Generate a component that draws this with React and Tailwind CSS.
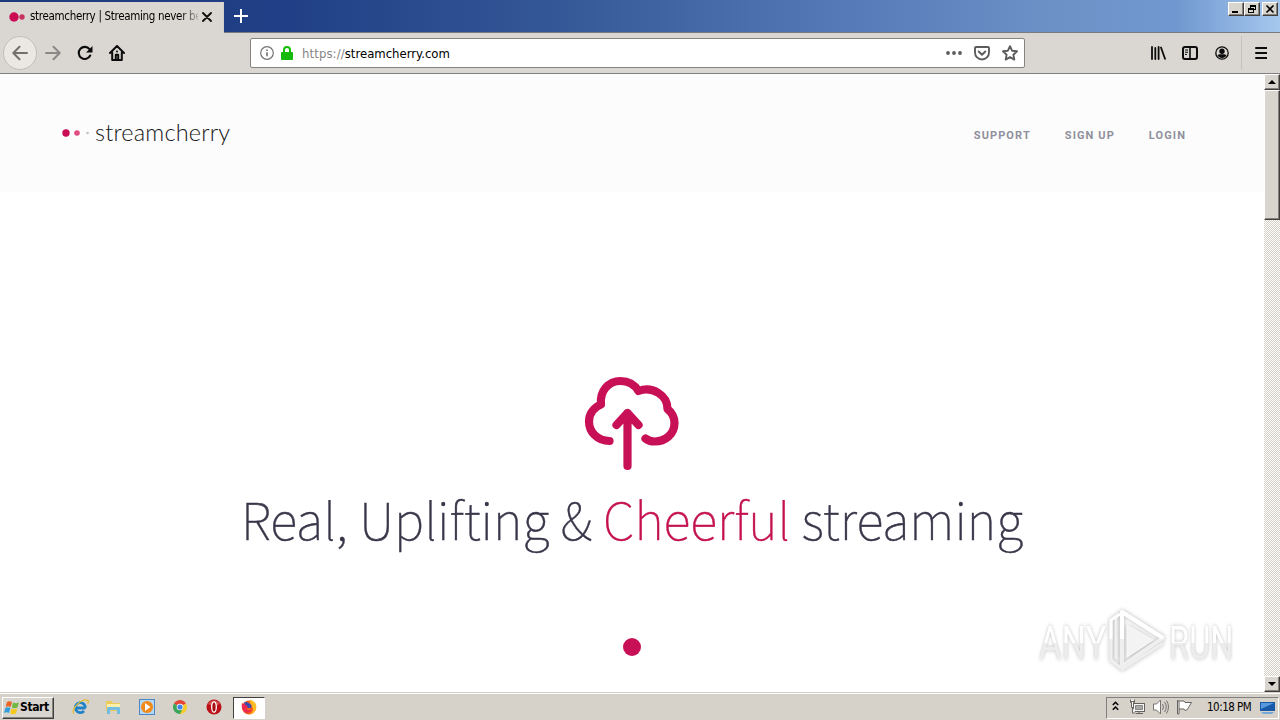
import React from 'react';

const raised = 'bg-[#d8d4ce] border border-t-white border-l-white border-r-[#404040] border-b-[#404040] shadow-[inset_-1px_-1px_0_#85827c]';

function WindowButton({ children, className = '' }) {
  return (
    <button className={`flex h-[14px] w-4 shrink-0 items-center justify-center ${raised} ${className}`}>
      <svg width="12" height="11" viewBox="0 0 12 11" fill="none" stroke="#000" shapeRendering="crispEdges">
        {children}
      </svg>
    </button>
  );
}

function TitleBar() {
  return (
    <div className="flex h-[33px] shrink-0 border-b border-[#787b82] bg-[linear-gradient(90deg,#1d3a7c_0%,#203f86_22%,#365998_45%,#5478b6_65%,#6c91c7_82%,#7198d0_92%,#a5c8ee_100%)]">
      <div className="mt-[2px] -mb-px flex w-[224px] shrink-0 items-center border-r border-[#d4d0c8] bg-[#dad6d1] pb-px">
        <svg className="ml-[9px] shrink-0" width="16" height="12" viewBox="0 0 16 12">
          <circle cx="5" cy="6" r="4.7" fill="#cb0c54" />
          <circle cx="13" cy="6" r="2.7" fill="#c9315f" />
        </svg>
        <span className="ml-[5px] w-[168px] whitespace-nowrap bg-[linear-gradient(90deg,#000_90%,transparent_102%)] bg-clip-text font-['DejaVu_Sans_Condensed','DejaVu_Sans',sans-serif] text-[11.5px] tracking-[-0.32px] text-transparent [font-stretch:condensed]">
          streamcherry | Streaming never be
        </span>
        <svg className="ml-[4px] shrink-0" width="10" height="10" viewBox="0 0 10 10" stroke="#111" strokeWidth="1.9" strokeLinecap="round">
          <path d="M1 1l8 8M9 1L1 9" />
        </svg>
      </div>
      <svg className="ml-[10px] mt-[9px]" width="14" height="14" viewBox="0 0 14 14" stroke="#fff" strokeWidth="2">
        <path d="M7 0v14M0 7h14" />
      </svg>
      <div className="ml-auto mr-[2px] mt-[2px] flex">
        <WindowButton><path d="M2 8.5h6M2 7.5h6" /></WindowButton>
        <WindowButton><path d="M4 1.5h6M4 2.5h6M4.5 1v3M9.5 1v5M7 5.5h3M2 4.5h6M2 5.5h6M2.5 4v5M7.5 4v5M2 8.5h6" /></WindowButton>
        <WindowButton className="ml-[2px]"><path d="M2.5 1.5l7 7M9.5 1.5l-7 7" strokeWidth="1.6" shapeRendering="auto" /></WindowButton>
      </div>
    </div>
  );
}

function Toolbar() {
  return (
    <div className="flex h-[41px] shrink-0 items-center border-b border-[#808080] bg-[#dad6d1]">
      <div className="ml-[3px] flex size-[34px] shrink-0 items-center justify-center rounded-full border border-[#c2bfba] bg-[#ebe8e4]">
        <svg width="16" height="16" viewBox="0 0 16 16" fill="none" stroke="#72706d" strokeWidth="2" strokeLinecap="round" strokeLinejoin="round">
          <path d="M15 8H1.5M7.5 1.8L1.3 8l6.2 6.2" />
        </svg>
      </div>
      <svg className="ml-[8px] shrink-0" width="16" height="16" viewBox="0 0 16 16" fill="none" stroke="#8b8987" strokeWidth="2" strokeLinecap="round" strokeLinejoin="round">
        <path d="M1 8h13.5M8.5 1.8L14.7 8l-6.2 6.2" />
      </svg>
      <svg className="ml-[16px] shrink-0" width="16" height="16" viewBox="0 0 16 16" fill="none" stroke="#0c0c0d" strokeWidth="2.1" strokeLinecap="round">
        <path d="M13.2 10.5A6 6 0 1 1 12.5 4.2" />
        <path d="M15.500 1v6.500H9z" fill="#0c0c0d" stroke="none" />
      </svg>
      <svg className="ml-[16px] shrink-0" width="16" height="16" viewBox="0 0 16 16" fill="none" stroke="#0c0c0d" strokeWidth="2" strokeLinecap="round" strokeLinejoin="round">
        <path d="M1 8l7-7 7 7M3.2 7.5V15h9.6V7.5" />
        <path d="M6.8 14.5V9.8h2.4v4.7" />
        <path d="M8 6.5v.1" />
      </svg>
      <div className="ml-[125px] flex h-[30px] w-[775px] shrink-0 items-center rounded-[2px] border border-[#85837f] bg-white">
        <svg className="ml-[9px]" width="14" height="14" viewBox="0 0 14 14" fill="none" stroke="#737373">
          <circle cx="7" cy="7" r="6.3" strokeWidth="1.2" />
          <path d="M7 6.2v4M7 3.4V5" strokeWidth="1.6" />
        </svg>
        <svg className="ml-[7px]" width="12" height="14" viewBox="0 0 12 14" fill="none">
          <path d="M3 7V4a3 3 0 0 1 6 0v3" stroke="#12bc00" strokeWidth="2" />
          <rect y="6" width="12" height="8" rx="1" fill="#16b90c" />
        </svg>
        <span className="ml-[9px] mt-px whitespace-nowrap font-['DejaVu_Sans_Condensed','DejaVu_Sans',sans-serif] text-[13px] text-black [font-stretch:condensed]">
          <span className="tracking-[0.1px] text-[#858585]">https://</span>streamcherry.com
        </span>
        <svg className="ml-auto" width="16" height="16" viewBox="0 0 16 16" fill="#5c5c5c">
          <circle cx="2" cy="8" r="1.9" /><circle cx="8" cy="8" r="1.9" /><circle cx="14" cy="8" r="1.9" />
        </svg>
        <svg className="ml-[12px]" width="16" height="16" viewBox="0 0 16 16" fill="none" stroke="#5c5c5c" strokeWidth="1.9" strokeLinecap="round" strokeLinejoin="round">
          <path d="M2 2h12a1 1 0 0 1 1 1v4.5a7 7 0 0 1-14 0V3a1 1 0 0 1 1-1z" />
          <path d="M4.7 6.5L8 9.7l3.3-3.2" />
        </svg>
        <svg className="ml-[12px] mr-[6px]" width="16" height="16" viewBox="0 0 16 16" fill="none" stroke="#5c5c5c" strokeWidth="1.9" strokeLinejoin="round">
          <path d="M8 1.2l2.1 4.5 4.9.6-3.6 3.4.9 4.9L8 12.2l-4.3 2.4.9-4.9L1 6.3l4.9-.6z" />
        </svg>
      </div>
      <svg className="ml-[125px] shrink-0" width="16" height="16" viewBox="0 0 16 16" stroke="#0c0c0d" strokeWidth="2" strokeLinecap="round">
        <path d="M2 2v12M5.300 3V14M8.600 2v12M11 2.5l4 11.3" strokeWidth="1.8" />
      </svg>
      <svg className="ml-[16px] shrink-0" width="16" height="16" viewBox="0 0 16 16" fill="none" stroke="#0c0c0d" strokeWidth="2">
        <rect x="1" y="2" width="14" height="12" rx="2" />
        <path d="M8 2v12" strokeWidth="1.6" />
        <path d="M3 5h3M3 7.2h3M3 9.4h2" strokeWidth="1" />
      </svg>
      <svg className="ml-[17px] shrink-0" width="14" height="14" viewBox="0 0 14 14">
        <circle cx="7" cy="7" r="6.2" fill="none" stroke="#0c0c0d" strokeWidth="1.3" />
        <circle cx="7" cy="5.2" r="2.7" fill="#0c0c0d" />
        <path d="M2.5 9.3c1.6-1.4 2.5-1 4.5-1s2.900-.4 4.500 1C10.500 11.300 9 12 7 12s-3.500-.7-4.500-2.700z" fill="#0c0c0d" />
      </svg>
      <div className="ml-[12px] h-[34px] w-px shrink-0 bg-[#c6c2bd]" />
      <svg className="ml-[13px] shrink-0" width="12" height="14" viewBox="0 0 12 14" stroke="#0c0c0d" strokeWidth="2" strokeLinecap="round">
        <path d="M1 2h10.500M1 7h10.500M1 12h10.500" />
      </svg>
    </div>
  );
}

function ScrollBar() {
  return (
    <div className="flex w-4 shrink-0 flex-col bg-[repeating-conic-gradient(#d4d0c8_0_25%,#fff_0_50%)] bg-[length:2px_2px]">
      <div className={`flex h-4 items-center justify-center ${raised}`}>
        <svg width="8" height="4" viewBox="0 0 8 4"><path d="M0 4l4-4 4 4z" /></svg>
      </div>
      <div className={`h-[130px] ${raised}`} />
      <div className={`mt-auto flex h-4 items-center justify-center ${raised}`}>
        <svg width="8" height="4" viewBox="0 0 8 4"><path d="M0 0l4 4 4-4z" /></svg>
      </div>
    </div>
  );
}

function Watermark() {
  const word = "inline-block origin-left font-['Roboto',sans-serif] text-[46px] font-normal leading-none text-transparent bg-[linear-gradient(180deg,#fff_50%,#ededed_51%)] bg-clip-text drop-shadow-[0_0_2px_rgba(0,0,0,0.25)]";
  return (
    <div className="absolute right-[31px] top-[535px] flex h-16 w-[194px] items-center">
      <div className="w-[66px] shrink-0 pt-[3px]"><span className={`${word} scale-x-[0.75]`}>ANY</span></div>
      <svg className="ml-[3px] shrink-0 overflow-visible drop-shadow-[0_0_2px_rgba(0,0,0,0.28)]" width="58" height="64" viewBox="0 0 58 64" fill="none" strokeLinejoin="round">
        <path d="M3 11v40l10 8M8 7v43" stroke="#f0f0f0" strokeWidth="3" />
        <path d="M3 30V11l9-6" stroke="#fff" strokeWidth="3" />
        <path d="M14 3l41 26-41 28z" stroke="#efefef" strokeWidth="4" />
        <path d="M14 30V3l41 26" stroke="#fff" strokeWidth="4" />
        <path d="M19 16l26 15-26 17z" fill="#f3f3f3" stroke="#fafafa" />
        <path d="M13 61l42-27" stroke="#eeeeee" strokeWidth="3" />
      </svg>
      <div className="ml-[3px] w-[64px] shrink-0 pt-[3px]"><span className={`${word} scale-x-[0.71]`}>RUN</span></div>
    </div>
  );
}

function Page() {
  return (
    <main className="relative flex min-w-0 flex-1 flex-col bg-white">
      <header className="flex h-[118px] shrink-0 items-center bg-[#fcfcfd] pl-[61px] pr-[78px]">
        <svg width="30" height="12" viewBox="0 0 30 12">
          <circle cx="5" cy="6" r="3.700" fill="#c90e55" />
          <circle cx="16" cy="6" r="2.800" fill="#df4b82" />
          <circle cx="26.500" cy="6" r="1.300" fill="#c9bcc4" />
        </svg>
        <span className="-mt-px ml-[4px] whitespace-nowrap font-['Lato',sans-serif] text-[23.5px] font-light leading-none tracking-[0.2px] text-[#161616]">streamcherry</span>
        <nav className="ml-auto mt-[4px] flex gap-[34px] whitespace-nowrap font-['Roboto',sans-serif] text-[11px] font-bold leading-none tracking-[1.1px] text-[#8f909b]">
          <span>SUPPORT</span><span>SIGN UP</span><span>LOGIN</span>
        </nav>
      </header>
      <section className="flex flex-col items-center">
        <svg className="mt-[184px]" width="96" height="96" viewBox="-0.5 0 96 96" fill="none" stroke="#c81056" strokeWidth="8.2" strokeLinecap="round" strokeLinejoin="round">
          <path d="M25 65C13 65 4.500 56 4.500 45.500c0-7.500 4.500-14 12-17C15 15 24 5 36 5c8 0 14 3.500 18 10 14-5 29 4 29 18 5 4 7 8.500 7 14 0 11-9 18.500-20 18.500-4 0-6.500-1-9-3" />
          <path d="M43 90V37M32 49l11-12 11 12" />
        </svg>
        <h1 className="mt-[6px] whitespace-nowrap font-['Noto_Sans_CJK_SC',sans-serif] text-[50.7px] font-thin leading-[80px] text-[#39364a] [-webkit-text-stroke:0.4px]">
          Real, Uplifting &amp; <span className="text-[#c4104f]">Cheerful</span> streaming
        </h1>
        <div className="mt-[80px] size-[18px] rounded-full bg-[#c81056]" />
      </section>
      <Watermark />
    </main>
  );
}

function TaskBar() {
  return (
    <footer className="flex h-[28px] shrink-0 items-center border-t border-[#d4d0c8] bg-[#d6d1c9] shadow-[inset_0_1px_0_#fff]">
      <button className={`ml-[2px] mt-[2px] flex h-[22px] w-[52px] items-center ${raised}`}>
        <svg className="ml-px shrink-0" width="16" height="16" viewBox="0 0 16 16">
          <path d="M3 2q2.500-1.500 5 0L6.700 7q-2.300-1.500-5 0z" fill="#ea6325" />
          <path d="M9 2.500q3 1.500 6 0L13.500 7.500q-3 1.500-5.700 0z" fill="#72b944" />
          <path d="M1.400 8q2.500-1.500 5 0L5 13q-2.500-1.500-5 0z" fill="#319fdb" />
          <path d="M7.500 8.500q3 1.500 5.700 0L12 13.500q-3 1.500-5.900 0z" fill="#f6c91f" />
        </svg>
        <span className="-mt-px font-['DejaVu_Sans_Condensed','DejaVu_Sans',sans-serif] text-[12px] font-bold tracking-[-0.4px] text-black [font-stretch:condensed]">Start</span>
      </button>
      <svg className="ml-[18px] shrink-0" width="17" height="16" viewBox="0 0 17 16" fill="none">
        <path d="M13.500 9H4.500M13.300 9A5 5 0 1 0 12 12" stroke="#1f83ca" strokeWidth="2.800" />
        <path d="M2 14.500C-2 11 10-2 16 1.500c1 1 .2 2-.4 3" stroke="#e5bc32" strokeWidth="1.300" />
      </svg>
      <svg className="ml-[16px] shrink-0" width="17" height="16" viewBox="0 0 17 16">
        <path d="M1 2h6l1 2h7v8H1z" fill="#eccb58" />
        <path d="M2 5h13v4H2z" fill="#faf0ac" />
        <path d="M2 15V9q0-1 1-1h11q1 0 1 1v6h-3v-4H5v4z" fill="#72bde4" />
      </svg>
      <svg className="ml-[17px] shrink-0" width="16" height="16" viewBox="0 0 16 16">
        <rect x=".5" y=".5" width="15" height="15" fill="#b6d7f3" stroke="#4c88c5" />
        <circle cx="8" cy="8" r="6" fill="#f18918" /><path d="M6 4l5.500 4L6 12z" fill="#fff" />
      </svg>
      <svg className="ml-[18px] shrink-0" width="14" height="14" viewBox="0 0 14 14">
        <path d="M7 7L.95 3.500A7 7 0 0 1 13 3.500z" fill="#e44636" />
        <path d="M7 7h6.500A7 7 0 0 1 7 14l3-5.300zM7 7l6.050-3.500A7 7 0 0 1 7 14z" fill="#f9cb28" />
        <path d="M7 7l2.700 1.700L7 14A7 7 0 0 1 .95 3.500z" fill="#3ca456" />
        <circle cx="7" cy="7" r="3.300" fill="#fff" /><circle cx="7" cy="7" r="2.600" fill="#4285e8" />
      </svg>
      <svg className="ml-[19px] shrink-0" width="16" height="16" viewBox="0 0 16 16">
        <circle cx="8" cy="8" r="7.500" fill="#bb1017" /><path d="M2 5a7 7 0 0 1 12 0q-6 3-12 0z" fill="#d44d4e" />
        <ellipse cx="8" cy="8" rx="2.300" ry="5.200" fill="#a60e13" stroke="#fff" strokeWidth="1.300" />
      </svg>
      <div className="ml-[11px] mt-[2px] flex h-[22px] w-[32px] shrink-0 items-center justify-center border border-b-white border-l-[#404040] border-r-white border-t-[#404040] bg-white">
        <svg className="-mt-px" width="16" height="16" viewBox="0 0 16 16">
          <circle cx="8" cy="8.500" r="7" fill="#f4611f" />
          <path d="M9 .5c5 2 7 5 6.200 9-.7 3.500-3.700 6-7.200 6 4-2 5-5 3-8C9.500 5 8.500 3 9 .5z" fill="#ffbc27" />
          <path d="M3 3.500l3-.500 4.500 3-.5 3H5z" fill="#374bb0" />
          <path d="M1 4l2.500 1.500L6 6.500l1 2-2 1c2 3 5 2 6 .5-.5 4-6 5-8.500 2C.5 9.500.5 6.500 1 4z" fill="#ed2851" />
        </svg>
      </div>
      <div className="ml-auto mr-px mt-[2px] flex h-[22px] w-[173px] shrink-0 items-center border border-b-white border-l-[#808080] border-r-white border-t-[#808080]">
        <svg className="ml-[5px] -mt-[3px] shrink-0" width="7" height="10" viewBox="0 0 7 10" fill="none" stroke="#000" strokeWidth="1.500">
          <path d="M.8 4l2.700-2.700L6.200 4M.8 8.700l2.700-2.700 2.700 2.700" />
        </svg>
        <svg className="-mt-px ml-[10px] shrink-0" width="16" height="16" viewBox="0 0 16 16" fill="#f7f7f7" stroke="#65635f">
          <rect x="4.500" y="4.500" width="11" height="8" /><path d="M6.500 6.500h7v4h-7z" fill="#aaa9a7" stroke="#888" />
          <path d="M7 14.500h7M10 12.500v2M1.500.5v3h1v5h2v-5h1v-3M1.500 2.500h4M3.500 8v6h3" />
        </svg>
        <svg className="-mt-px ml-[8px] shrink-0" width="16" height="16" viewBox="0 0 16 16" fill="#fff" stroke="#777571">
          <path d="M.5 5h3l4-4v14l-4-4h-3z" /><path d="M9.500 5q2 3 0 6M11.500 3q3.500 5 0 10M13.500 1.500q4 6.500 0 13" fill="none" />
        </svg>
        <svg className="-mt-px ml-[7px] shrink-0" width="16" height="16" viewBox="0 0 16 16" fill="#fff" stroke="#65635f">
          <path d="M1.500 1v14h1.500V10h5l1 1.500q3-.5 3.500-3l3-5H9L8 2H1.500z" /><path d="M3 2v8" />
        </svg>
        <span className="ml-[15px] mt-px whitespace-nowrap font-['DejaVu_Sans_Condensed','DejaVu_Sans',sans-serif] text-[11.5px] tracking-[-0.5px] text-black [font-stretch:condensed]">10:18 PM</span>
        <svg className="ml-auto mr-[3px] shrink-0" width="15" height="13" viewBox="0 0 15 13">
          <path d="M0 1h15v9H0z" fill="#1758a8" /><path d="M1 2h13L1 8z" fill="#5999db" /><path d="M1 11h13l-2 2H3z" fill="#75a9d9" />
        </svg>
      </div>
    </footer>
  );
}

export default function App() {
  return (
    <div className="flex h-[720px] w-[1280px] flex-col overflow-hidden">
      <TitleBar />
      <Toolbar />
      <div className="flex min-h-0 flex-1">
        <Page />
        <ScrollBar />
      </div>
      <TaskBar />
    </div>
  );
}
